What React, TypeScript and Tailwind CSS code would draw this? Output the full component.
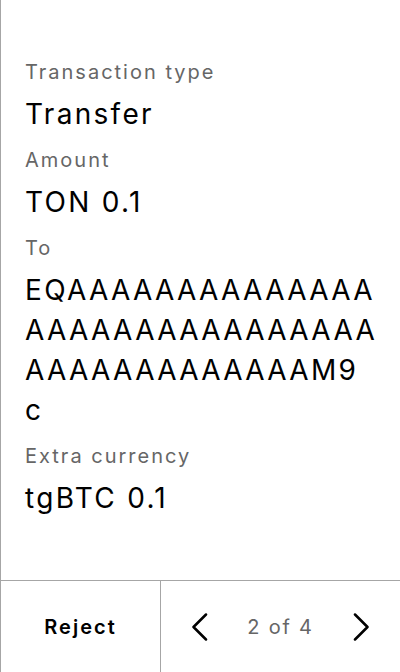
import React from 'react';

// Address is wrapped the way the device wraps it (16 / 16 / 15 / 1 chars).
const ADDRESS_LINES = ['EQ' + 'A'.repeat(14), 'A'.repeat(16), 'A'.repeat(13) + 'M9', 'c'];

const FIELDS = [
  { label: 'Transaction type', value: ['Transfer'] },
  { label: 'Amount', value: ['TON 0.1'] },
  { label: 'To', value: ADDRESS_LINES },
  { label: 'Extra currency', value: ['tgBTC 0.1'] },
];

function Chevron({ dir }: { dir: 'left' | 'right' }) {
  return (
    <svg width="16" height="28" viewBox="0 0 16 28" fill="none" aria-hidden>
      <polyline
        points={dir === 'left' ? '14,1.5 1.5,14 14,26.5' : '2,1.5 14.5,14 2,26.5'}
        stroke="#000"
        strokeWidth="2.5"
        strokeLinecap="round"
        strokeLinejoin="round"
      />
    </svg>
  );
}

export default function App() {
  return (
    <div
      className="flex h-[672px] w-[400px] flex-col overflow-hidden border-l border-[#a6a6a6] bg-white text-black"
      style={{ fontFamily: 'Inter, "Noto Sans", sans-serif' }}
    >
      {/* review fields */}
      <div className="flex flex-1 flex-col pl-6 pt-[57px]">
        {FIELDS.map((f) => (
          <div key={f.label} className="mb-[11px]">
            <div className="text-[20px] leading-[30px] tracking-[2px] text-[#666]">{f.label}</div>
            <div className="mt-[7px] flex flex-col text-[28px] leading-[40px] tracking-[2.3px]">
              {f.value.map((line, i) => (
                <span key={i} className="whitespace-nowrap">
                  {line}
                </span>
              ))}
            </div>
          </div>
        ))}
      </div>

      {/* footer */}
      <div className="flex h-[92px] border-t border-[#a6a6a6]">
        <button className="flex w-[159px] items-center justify-center text-[20px] font-semibold tracking-[2px]">
          Reject
        </button>
        <div className="flex flex-1 items-center justify-between border-l border-[#a6a6a6] px-[31px]">
          <Chevron dir="left" />
          <span className="text-[20px] tracking-[1.8px] text-[#666]">2 of 4</span>
          <Chevron dir="right" />
        </div>
      </div>
    </div>
  );
}
